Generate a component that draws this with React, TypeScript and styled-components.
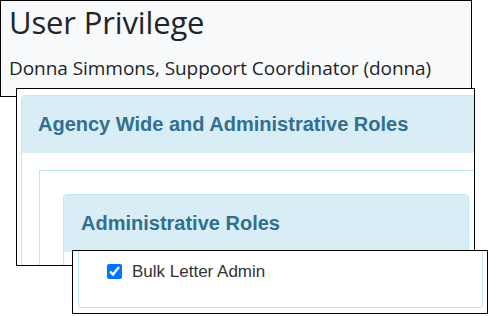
import React from "react";
import styled, { createGlobalStyle } from "styled-components";

const GlobalStyle = createGlobalStyle`
  html, body {
    margin: 0;
    padding: 0;
    background: #ffffff;
  }
`;

const Canvas = styled.div`
  position: relative;
  width: 489px;
  height: 316px;
  overflow: hidden;
  background: #ffffff;
`;

// each cropped screenshot is a "window" laid over the previous one
const Window = styled.div<{ $left: number; $top: number; $width: number; $height: number; $bg?: string }>`
  position: absolute;
  left: ${(p) => p.$left}px;
  top: ${(p) => p.$top}px;
  width: ${(p) => p.$width}px;
  height: ${(p) => p.$height}px;
  box-sizing: border-box;
  border: 1px solid #000000;
  background: ${(p) => p.$bg || "#ffffff"};
  overflow: hidden;
`;

const HeaderPane = styled.div`
  display: flex;
  flex-direction: column;
  padding: 3px 0 0 8px;
  font-family: "Open Sans", "Noto Sans", sans-serif;
  color: #212529;
`;

const PageTitle = styled.h1`
  margin: 0;
  font-size: 31px;
  font-weight: 400;
  letter-spacing: -0.15px;
  line-height: 1.2;
`;

const UserLine = styled.div`
  margin-top: 16px;
  font-size: 19px;
  letter-spacing: -0.05px;
  line-height: 1.2;
`;

const RolesPane = styled.div`
  padding: 6px 0 0 4px;
  font-family: "Liberation Sans", Arial, sans-serif;
`;

const Card = styled.div<{ $width?: number }>`
  box-sizing: border-box;
  width: ${(p) => (p.$width ? `${p.$width}px` : "auto")};
  border: 1px solid #bce8f1;
  border-radius: 4px;
  background: #ffffff;
`;

const CardHeading = styled.div<{ $pad: number }>`
  padding: 17px ${(p) => p.$pad}px 18px;
  background: #d9edf7;
  border-radius: 3px 3px 0 0;
  color: #31708f;
  font-size: 20px;
  font-weight: 700;
  line-height: 1.1;
`;

const CardBody = styled.div<{ $pad: number }>`
  padding: ${(p) => p.$pad}px;
`;

const NestedCard = styled.div`
  border: 1px solid #bee5eb;
  padding: 23px;
`;

const CheckPane = styled.div`
  padding: 0 4px 5px 5px;
  height: 100%;
  box-sizing: border-box;
  font-family: "Liberation Sans", Arial, sans-serif;
`;

const CroppedBody = styled.div`
  height: 100%;
  box-sizing: border-box;
  border: 1px solid #bce8f1;
  border-top: none;
  border-radius: 0 0 4px 4px;
  padding: 12px 0 0 28px;
`;

const CheckRow = styled.label`
  display: flex;
  align-items: center;
  gap: 10px;
  color: #333333;
  font-size: 17px;
  line-height: 1;
`;

const CheckBox = styled.input`
  width: 15px;
  height: 15px;
  margin: 0;
  accent-color: #0075ff;
`;

export default function App() {
  return (
    <Canvas>
      <GlobalStyle />
      <Window $left={0} $top={0} $width={472} $height={97} $bg="#f8f9fa">
        <HeaderPane>
          <PageTitle>User Privilege</PageTitle>
          <UserLine>Donna Simmons, Suppoort Coordinator (donna)</UserLine>
        </HeaderPane>
      </Window>

      <Window $left={16} $top={88} $width={459} $height={178}>
        <RolesPane>
          <Card $width={490}>
            <CardHeading $pad={16}>Agency Wide and Administrative Roles</CardHeading>
            <CardBody $pad={17}>
              <NestedCard>
                <Card>
                  <CardHeading $pad={17}>Administrative Roles</CardHeading>
                  <CardBody $pad={17} />
                </Card>
              </NestedCard>
            </CardBody>
          </Card>
        </RolesPane>
      </Window>

      <Window $left={72} $top={250} $width={416} $height={64}>
        <CheckPane>
          <CroppedBody>
            <CheckRow>
              <CheckBox type="checkbox" defaultChecked readOnly />
              Bulk Letter Admin
            </CheckRow>
          </CroppedBody>
        </CheckPane>
      </Window>
    </Canvas>
  );
}
